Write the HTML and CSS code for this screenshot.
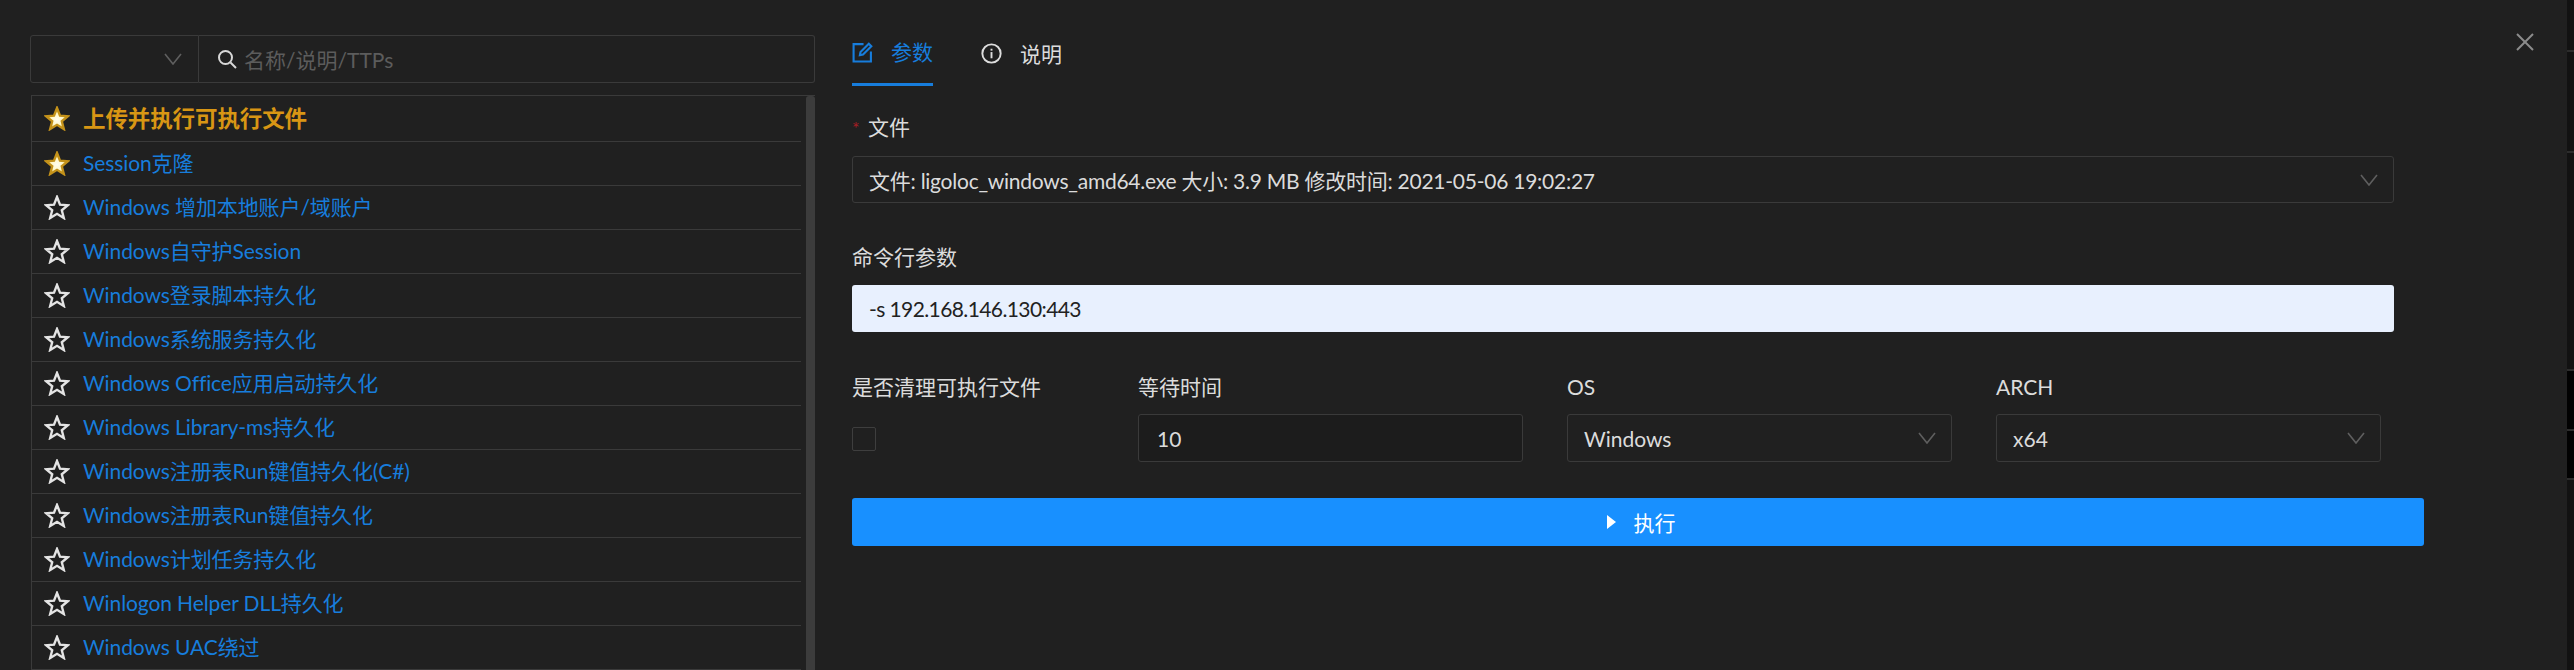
FILE: index.html
```html
<!DOCTYPE html>
<html lang="zh-CN">

<head>
    <meta charset="UTF-8">
    <title>模块参数</title>
    <link rel="stylesheet" href="styles.css">
</head>

<body>
    <svg class="defs" width="0" height="0">
        <defs>
            <radialGradient id="goldFill" cx="50%" cy="55%" r="55%">
                <stop offset="0%" stop-color="#fffdf0" />
                <stop offset="55%" stop-color="#fff6c2" />
                <stop offset="100%" stop-color="#d9b52c" />
            </radialGradient>
            <symbol id="star" viewBox="0 0 26 25">
                <polygon points="13,2 16,9.6 24,10.2 17.8,15.3 19.8,23 13,18.8 6.2,23 8.2,15.3 2,10.2 10,9.6" />
            </symbol>
            <symbol id="chevron" viewBox="0 0 18 12">
                <polyline points="1,1 9,11 17,1" />
            </symbol>
        </defs>
    </svg>

    <div class="drawer">
        <!-- left: module list -->
        <div class="side">
            <div class="search-bar">
                <div class="type-select">
                    <svg class="chevron"><use href="#chevron" /></svg>
                </div>
                <div class="search-input">
                    <svg class="search-icon" viewBox="0 0 20 20">
                        <circle cx="8.5" cy="8.5" r="6.5" />
                        <line x1="13.5" y1="13.5" x2="19" y2="19" />
                    </svg>
                    <input type="text" placeholder="名称/说明/TTPs">
                </div>
            </div>

            <div class="module-list">
                <ul class="modules">
                    <li class="module module-main"><svg class="star star-on"><use href="#star" /></svg><a>上传并执行可执行文件</a></li>
                    <li class="module"><svg class="star star-on"><use href="#star" /></svg><a>Session克隆</a></li>
                    <li class="module"><svg class="star"><use href="#star" /></svg><a>Windows 增加本地账户/域账户</a></li>
                    <li class="module"><svg class="star"><use href="#star" /></svg><a>Windows自守护Session</a></li>
                    <li class="module"><svg class="star"><use href="#star" /></svg><a>Windows登录脚本持久化</a></li>
                    <li class="module"><svg class="star"><use href="#star" /></svg><a>Windows系统服务持久化</a></li>
                    <li class="module"><svg class="star"><use href="#star" /></svg><a>Windows Office应用启动持久化</a></li>
                    <li class="module"><svg class="star"><use href="#star" /></svg><a>Windows Library-ms持久化</a></li>
                    <li class="module"><svg class="star"><use href="#star" /></svg><a>Windows注册表Run键值持久化(C#)</a></li>
                    <li class="module"><svg class="star"><use href="#star" /></svg><a>Windows注册表Run键值持久化</a></li>
                    <li class="module"><svg class="star"><use href="#star" /></svg><a>Windows计划任务持久化</a></li>
                    <li class="module"><svg class="star"><use href="#star" /></svg><a>Winlogon Helper DLL持久化</a></li>
                    <li class="module"><svg class="star"><use href="#star" /></svg><a>Windows UAC绕过</a></li>
                </ul>
                <div class="scrollbar"></div>
            </div>
        </div>

        <!-- right: params form -->
        <div class="main">
            <div class="tabs">
                <div class="tab tab-active">
                    <svg class="tab-icon" viewBox="0 0 20 20">
                        <path d="M11 2H1.5v16.5H18V9" />
                        <path d="M7.5 12.5l.6-3L16 1.6l2.4 2.4-7.9 7.9z" />
                    </svg>
                    参数
                </div>
                <div class="tab">
                    <svg class="tab-icon" viewBox="0 0 22 22">
                        <circle cx="11" cy="11" r="9.6" />
                        <line x1="11" y1="9.5" x2="11" y2="16" />
                        <line x1="11" y1="6" x2="11" y2="8" />
                    </svg>
                    说明
                </div>
            </div>

            <form class="params">
                <label class="field-label label-file"><span class="required">*</span>文件</label>
                <div class="select select-wide">
                    <span>文件: ligoloc_windows_amd64.exe 大小: 3.9 MB 修改时间: 2021-05-06 19:02:27</span>
                    <svg class="chevron"><use href="#chevron" /></svg>
                </div>

                <label class="field-label label-args">命令行参数</label>
                <input class="input-args" type="text" value="-s 192.168.146.130:443">

                <div class="options">
                    <div class="option">
                        <label class="field-label">是否清理可执行文件</label>
                        <span class="checkbox"></span>
                    </div>
                    <div class="option">
                        <label class="field-label">等待时间</label>
                        <input class="input-wait" type="text" value="10">
                    </div>
                    <div class="option">
                        <label class="field-label">OS</label>
                        <div class="select">
                            <span>Windows</span>
                            <svg class="chevron"><use href="#chevron" /></svg>
                        </div>
                    </div>
                    <div class="option">
                        <label class="field-label">ARCH</label>
                        <div class="select">
                            <span>x64</span>
                            <svg class="chevron"><use href="#chevron" /></svg>
                        </div>
                    </div>
                </div>

                <button class="run-btn" type="button"><span class="run-arrow"></span>执行</button>
            </form>
        </div>

        <svg class="close" viewBox="0 0 18 18">
            <line x1="1" y1="1" x2="17" y2="17" />
            <line x1="17" y1="1" x2="1" y2="17" />
        </svg>
    </div>

    <!-- table rows of the page behind the drawer -->
    <div class="behind">
        <div class="behind-row h-52"></div>
        <div class="behind-row h-101"></div>
        <div class="behind-row h-218"></div>
        <div class="behind-row behind-dark h-60"></div>
        <div class="behind-row behind-dark h-49"></div>
        <div class="behind-row behind-low"></div>
    </div>
</body>

</html>
```

FILE: styles.css
```css
* {
    box-sizing: border-box;
}

html,
body {
    height: 100%;
}

body {
    display: flex;
    margin: 0;
    overflow: hidden;
    background-color: #121212;
    color: rgba(255, 255, 255, 0.85);
    font-family: Lato, "Noto Sans CJK SC", sans-serif;
    font-size: 21px;
}

.defs {
    position: absolute;
}

.drawer {
    position: relative;
    display: flex;
    flex: none;
    width: 2567px;
    height: 670px;
    background-color: #202020;
}

.side {
    flex: none;
    width: 785px;
    margin-left: 30px;
    padding-top: 35px;
}

.search-bar {
    display: flex;
    height: 48px;
}

.type-select {
    display: flex;
    flex: none;
    align-items: center;
    justify-content: flex-end;
    width: 169px;
    padding-right: 16px;
    border: 1px solid #3a3a3a;
    border-radius: 3px 0 0 3px;
}

.search-input {
    display: flex;
    flex: 1;
    align-items: center;
    padding-left: 18px;
    border: 1px solid #3a3a3a;
    border-left: none;
    border-radius: 0 3px 3px 0;
}

.search-icon {
    flex: none;
    width: 20px;
    height: 20px;
    margin-right: 5px;
    fill: none;
    stroke: #d8d8d8;
    stroke-width: 2;
}

.search-input input {
    flex: 1;
    border: none;
    outline: none;
    background: none;
    color: inherit;
    font: inherit;
}

.search-input input::placeholder {
    color: #5c5c5c;
}

.chevron {
    flex: none;
    width: 18px;
    height: 12px;
    fill: none;
    stroke: #5f5f5f;
    stroke-width: 1.6;
}

.module-list {
    display: flex;
    height: 575px;
    margin-top: 12px;
    margin-left: 1px;
    overflow: hidden;
    border-top: 1px solid #3a3a3a;
    border-left: 1px solid #3a3a3a;
}

.modules {
    flex: none;
    width: 769px;
    margin: 0;
    padding: 0;
    list-style: none;
}

.module {
    display: flex;
    align-items: center;
    height: 44px;
    padding-left: 12px;
    border-bottom: 1px solid #3a3a3a;
    color: #177ddc;
}

.module a {
    padding-bottom: 3px;
    letter-spacing: -0.1px;
}

.module-main {
    height: 46px;
    color: #d89614;
    font-size: 22.5px;
    font-weight: 700;
}

.star {
    flex: none;
    width: 26px;
    height: 25px;
    margin-right: 13px;
    fill: none;
    stroke: #e4e4e4;
    stroke-width: 2.4;
}

.star-on {
    fill: url(#goldFill);
    stroke: #c4921a;
}

.scrollbar {
    flex: none;
    width: 9px;
    margin-left: 5px;
    background-color: #3c3c3c;
    border-radius: 3px 3px 0 0;
}

.main {
    flex: none;
    width: 1572px;
    margin-left: 37px;
}

.tabs {
    display: flex;
    gap: 48px;
    height: 86px;
}

.tab {
    display: flex;
    align-items: center;
    height: 86px;
    padding: 36px 0 15px;
    line-height: 32px;
}

.tab-active {
    border-bottom: 3px solid #177ddc;
    color: #177ddc;
}

.tab-icon {
    flex: none;
    width: 21px;
    height: 21px;
    margin-right: 18px;
    fill: none;
    stroke: currentColor;
    stroke-width: 2;
}

.field-label {
    display: block;
    height: 30px;
    line-height: 30px;
}

.label-file {
    margin-top: 26px;
}

.required {
    display: inline-block;
    width: 16px;
    color: #a61d24;
    font-size: 18px;
}

.select {
    display: flex;
    align-items: center;
    justify-content: space-between;
    height: 48px;
    margin-top: 12px;
    padding: 0 15px 0 16px;
    border: 1px solid #3a3a3a;
    border-radius: 3px;
}

.select-wide {
    width: 1542px;
    height: 47px;
    margin-top: 14px;
    letter-spacing: -0.25px;
}

.label-args {
    margin-top: 39px;
}

.input-args {
    display: block;
    width: 1542px;
    height: 47px;
    margin-top: 13px;
    padding: 0 16px 0 17px;
    border: none;
    border-radius: 3px;
    background-color: #e8f0fe;
    color: #222;
    font: inherit;
    letter-spacing: -0.6px;
}

.options {
    display: grid;
    grid-template-columns: 242px 385px 385px 385px;
    column-gap: 44px;
    margin-top: 40px;
}

.checkbox {
    display: block;
    width: 24px;
    height: 24px;
    margin-top: 25px;
    border: 1px solid #3e3e3e;
    border-radius: 2px;
}

.input-wait {
    display: block;
    width: 100%;
    height: 48px;
    margin-top: 12px;
    padding: 0 18px;
    border: 1px solid #3a3a3a;
    border-radius: 3px;
    background-color: #1c1c1c;
    color: inherit;
    font: inherit;
}

.run-btn {
    display: flex;
    align-items: center;
    justify-content: center;
    width: 100%;
    height: 48px;
    margin-top: 36px;
    padding-left: 12px;
    border: none;
    border-radius: 3px;
    background-color: #1890ff;
    color: #fff;
    font: inherit;
}

.run-arrow {
    width: 0;
    height: 0;
    margin-right: 18px;
    border-top: 7px solid transparent;
    border-bottom: 7px solid transparent;
    border-left: 9px solid #fff;
}

.close {
    position: absolute;
    top: 33px;
    left: 2516px;
    width: 18px;
    height: 18px;
    stroke: #8c8c8c;
    stroke-width: 2;
}

.behind {
    flex: 1;
}

.behind-row {
    border-bottom: 2px solid #2c2c2c;
}

.behind-dark {
    background-color: #020202;
}

.behind-low {
    border-bottom: none;
}

.h-52 {
    height: 52px;
}

.h-101 {
    height: 101px;
}

.h-218 {
    height: 218px;
}

.h-60 {
    height: 60px;
}

.h-49 {
    height: 49px;
}
```
